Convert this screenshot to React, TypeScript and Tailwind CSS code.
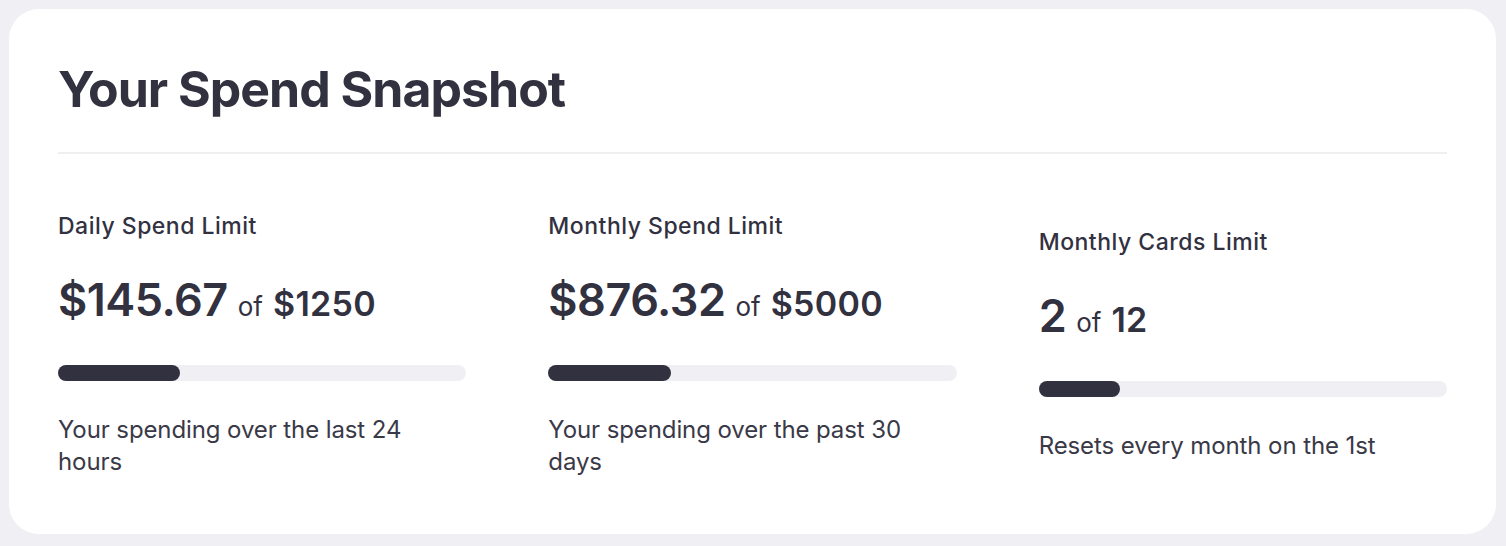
import React from "react";

type Stat = {
  label: string;
  value: string;
  total: string;
  pct: number;
  note: string;
};

const STATS: Stat[] = [
  {
    label: "Daily Spend Limit",
    value: "$145.67",
    total: "$1250",
    pct: 30,
    note: "Your spending over the last 24 hours",
  },
  {
    label: "Monthly Spend Limit",
    value: "$876.32",
    total: "$5000",
    pct: 30,
    note: "Your spending over the past 30 days",
  },
  {
    label: "Monthly Cards Limit",
    value: "2",
    total: "12",
    pct: 20,
    note: "Resets every month on the 1st",
  },
];

function StatBlock({ stat }: { stat: Stat }) {
  return (
    <div className="flex flex-col">
      <div className="text-[23px] leading-[30px] font-medium tracking-[0.5px]">{stat.label}</div>
      <div className="mt-[32px] leading-[54px] whitespace-nowrap">
        <span className="text-[45px] font-semibold tracking-[-0.5px]">{stat.value}</span>
        <span className="ml-[10px] text-[26px] font-normal">of</span>
        <span className="ml-[10px] text-[34px] font-semibold tracking-[0.3px]">{stat.total}</span>
      </div>
      <div className="mt-[28px] h-4 w-full rounded-full bg-[#f0f0f4]">
        <div
          className="h-4 rounded-full bg-[#32313f]"
          style={{ width: `${stat.pct}%` }}
        />
      </div>
      <p className="mt-[33px] text-[24px] leading-[32px] tracking-[-0.1px] text-[#3a3947]">
        {stat.note}
      </p>
    </div>
  );
}

export default function App() {
  return (
    <div
      className="min-h-screen bg-[#f0f0f4] pt-[9px] pl-[9px] pr-[10px] pb-[13px] text-[#32313f]"
      style={{ fontFamily: "Inter, 'Noto Sans', sans-serif" }}
    >
      <div className="rounded-[30px] bg-white px-[49px] pt-[50px] pb-[56px]">
        <h1 className="text-[50px] leading-[60px] font-bold tracking-[-1px]">
          Your Spend Snapshot
        </h1>
        <div className="mt-[33px] h-[2px] bg-[#efeff2]" />
        <div className="mt-[57px] grid grid-cols-3 items-center gap-[82px]">
          {STATS.map((s) => (
            <StatBlock key={s.label} stat={s} />
          ))}
        </div>
      </div>
    </div>
  );
}
